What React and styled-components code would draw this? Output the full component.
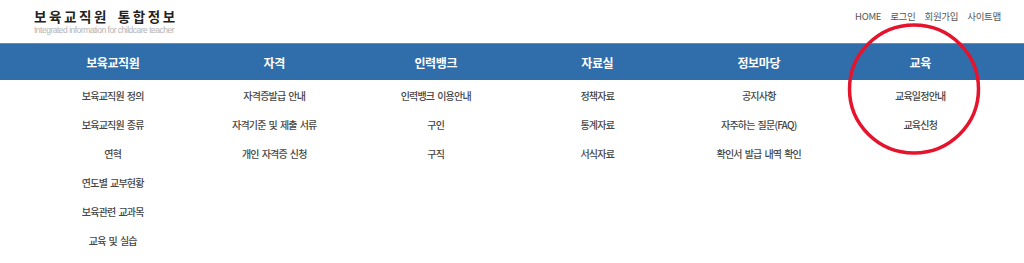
import React from 'react';
import styled, { createGlobalStyle } from 'styled-components';

const GlobalStyle = createGlobalStyle`
  html, body {
    margin: 0;
    padding: 0;
    background: #fff;
  }
  body {
    font-family: "Noto Sans CJK KR", "Noto Sans", sans-serif;
  }
`;

const Page = styled.div`
  position: relative;
  width: 1024px;
  height: 263px;
  overflow: hidden;
`;

const Header = styled.header`
  display: flex;
  justify-content: space-between;
  align-items: flex-start;
  height: 43px;
  padding: 0 23px 0 34px;
  box-sizing: border-box;
`;

const Logo = styled.div`
  display: flex;
  flex-direction: column;
  gap: 2px;
  padding-top: 9px;
`;

const LogoTitle = styled.h1`
  margin: 0;
  font-size: 13.5px;
  line-height: 15px;
  font-weight: 700;
  letter-spacing: 2.6px;
  word-spacing: 3px;
  color: #222;
`;

const LogoSub = styled.span`
  font-family: "Liberation Sans", Arial, sans-serif;
  font-size: 8.5px;
  line-height: 9px;
  letter-spacing: -0.5px;
  color: #b4b4b4;
  white-space: nowrap;
`;

const Util = styled.nav`
  display: flex;
  gap: 9px;
  padding-top: 9px;
  font-size: 9.5px;
  line-height: 14px;
  letter-spacing: -0.3px;
  color: #555;
`;

const UtilLink = styled.a`
  color: inherit;
  text-decoration: none;
`;

const Columns = styled.div`
  display: grid;
  grid-template-columns: repeat(6, 161.5px);
  padding-left: 32px;
`;

const Bar = styled.div`
  background: #2f6eaa;
  border-top: 1px solid #5b8fc4;
  height: 36px;
`;

const BarItem = styled.div`
  display: flex;
  align-items: center;
  justify-content: center;
  height: 36px;
  color: #fff;
  font-size: 12px;
  font-weight: 700;
  letter-spacing: -0.4px;
`;

const SubList = styled.ul`
  list-style: none;
  margin: 0;
  padding: 1px 0 0;
  display: flex;
  flex-direction: column;
  align-items: center;
`;

const SubItem = styled.li`
  height: 29px;
  line-height: 29px;
  font-size: 10px;
  font-weight: 500;
  letter-spacing: -0.8px;
  word-spacing: 1.5px;
  color: #454545;
  white-space: nowrap;
`;

const Circle = styled.svg`
  position: absolute;
  left: 847px;
  top: 22px;
  pointer-events: none;
`;

const menus = [
  { title: '보육교직원', items: ['보육교직원 정의', '보육교직원 종류', '연혁', '연도별 교부현황', '보육관련 교과목', '교육 및 실습'] },
  { title: '자격', items: ['자격증발급 안내', '자격기준 및 제출 서류', '개인 자격증 신청'] },
  { title: '인력뱅크', items: ['인력뱅크 이용안내', '구인', '구직'] },
  { title: '자료실', items: ['정책자료', '통계자료', '서식자료'] },
  { title: '정보마당', items: ['공지사항', '자주하는 질문(FAQ)', '확인서 발급 내역 확인'] },
  { title: '교육', items: ['교육일정안내', '교육신청'] },
];

const App = () => (
  <>
    <GlobalStyle />
    <Page>
      <Header>
        <Logo>
          <LogoTitle>보육교직원 통합정보</LogoTitle>
          <LogoSub>Integrated information for childcare teacher</LogoSub>
        </Logo>
        <Util>
          <UtilLink href="#">HOME</UtilLink>
          <UtilLink href="#">로그인</UtilLink>
          <UtilLink href="#">회원가입</UtilLink>
          <UtilLink href="#">사이트맵</UtilLink>
        </Util>
      </Header>
      <Bar>
        <Columns>
          {menus.map(m => (
            <BarItem key={m.title}>{m.title}</BarItem>
          ))}
        </Columns>
      </Bar>
      <Columns>
        {menus.map(m => (
          <SubList key={m.title}>
            {m.items.map(it => (
              <SubItem key={it}>{it}</SubItem>
            ))}
          </SubList>
        ))}
      </Columns>
      <Circle width="134" height="134" viewBox="0 0 134 134">
        <ellipse cx="67" cy="67" rx="64.5" ry="64" fill="none" stroke="#e5132c" strokeWidth="3.5" />
      </Circle>
    </Page>
  </>
);

export default App;
